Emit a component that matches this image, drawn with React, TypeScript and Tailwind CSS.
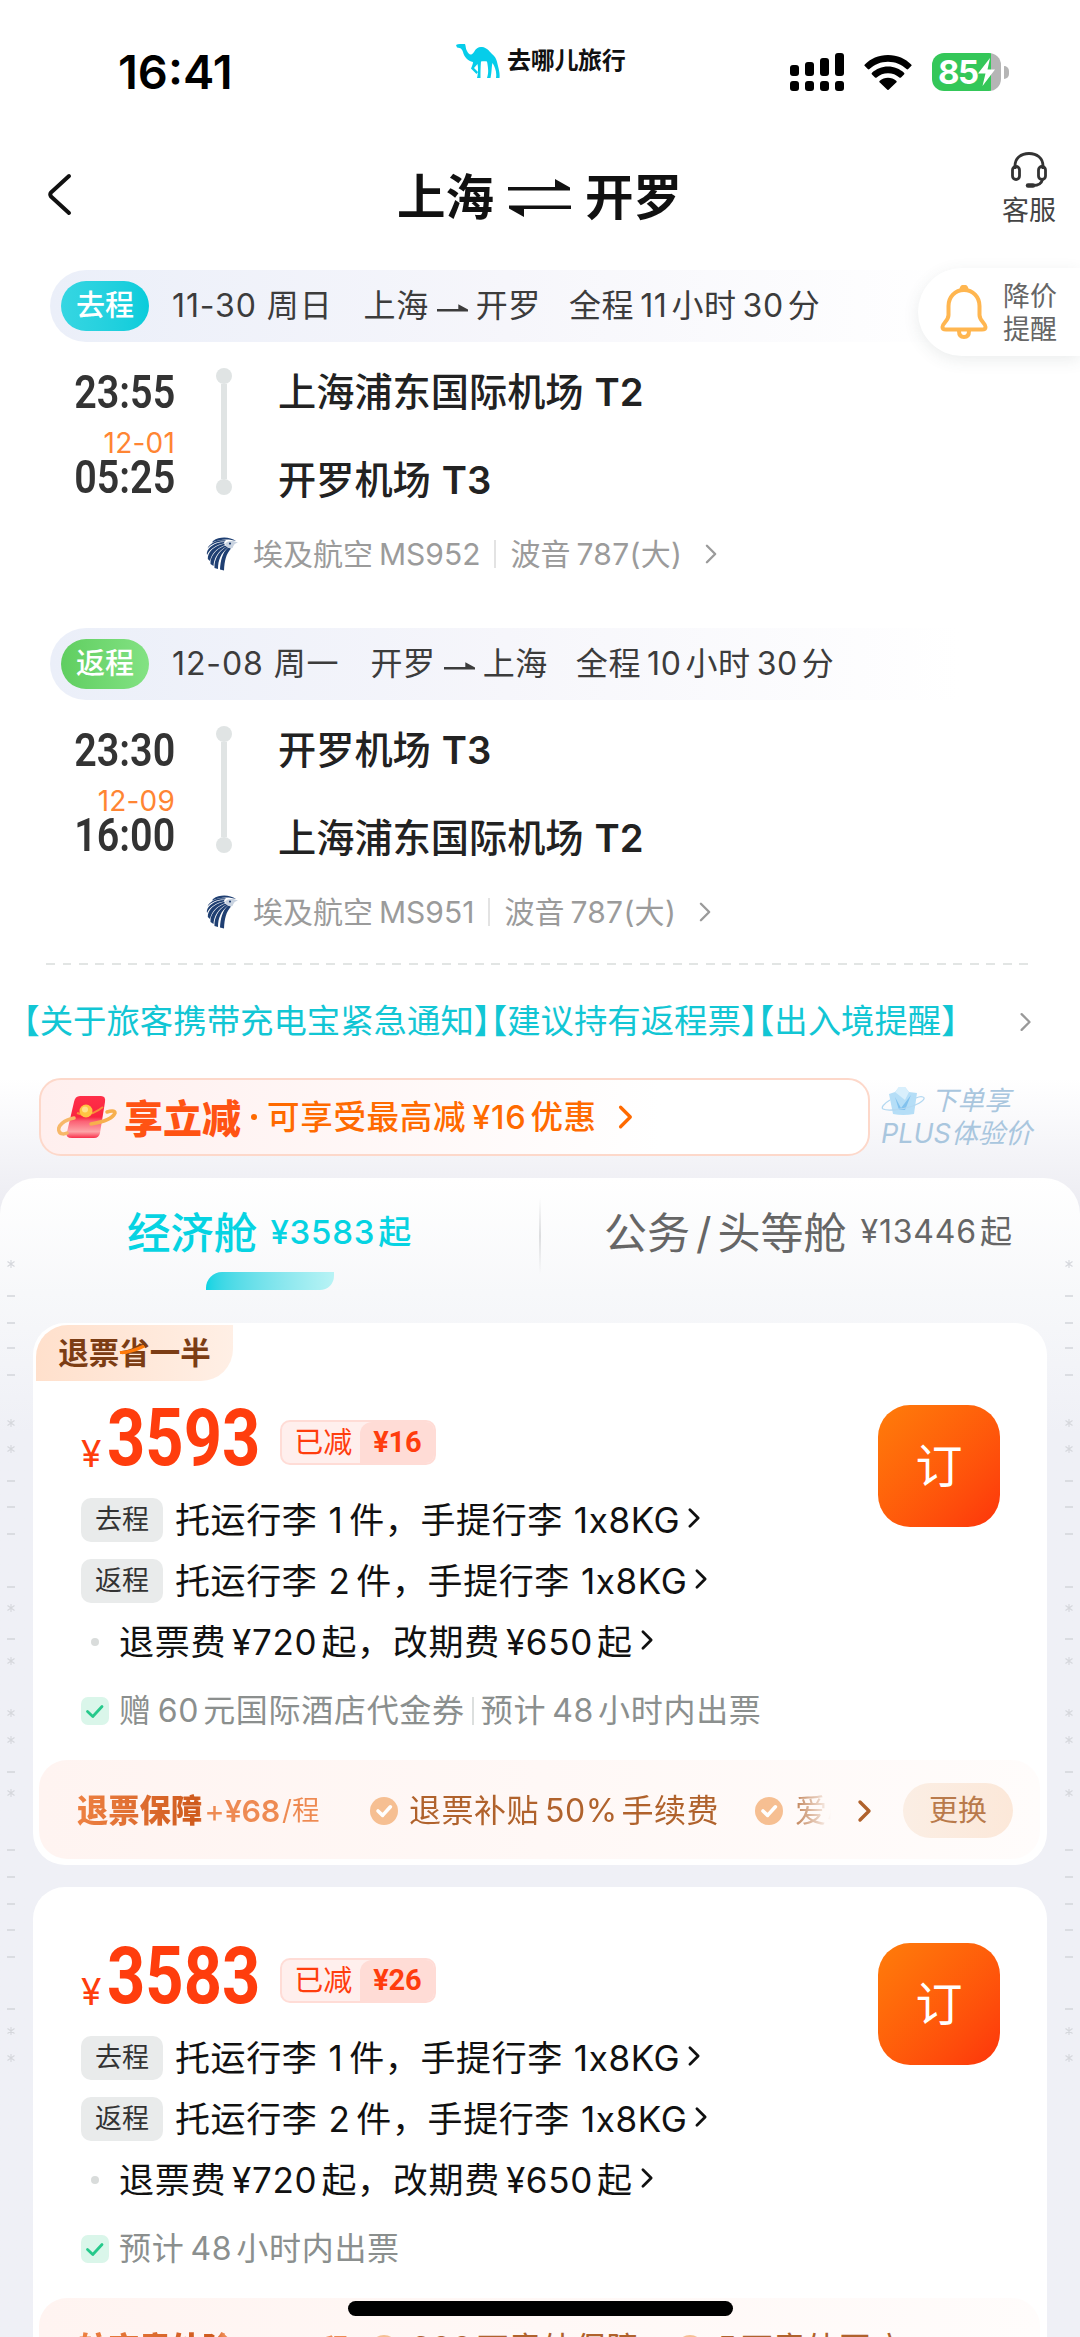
import type { ReactNode } from "react";

interface Leg {
  label: string;
  pill: string;
  date: string;
  from: string;
  to: string;
  duration: [string, string];
  depart: string;
  arriveDate: string;
  arrive: string;
  departAirport: [string, string];
  arriveAirport: [string, string];
  flight: string;
}

interface Fare {
  tag?: string;
  price: string;
  cut: string;
  perks: ReactNode;
  insurance: ReactNode;
}

const legs: Leg[] = [
  {
    label: "去程",
    pill: "bg-gradient-to-r from-[#35d6e2] to-[#08ccdb]",
    date: "11-30 周日",
    from: "上海",
    to: "开罗",
    duration: ["11", "30"],
    depart: "23:55",
    arriveDate: "12-01",
    arrive: "05:25",
    departAirport: ["上海浦东国际机场", "T2"],
    arriveAirport: ["开罗机场", "T3"],
    flight: "MS952",
  },
  {
    label: "返程",
    pill: "bg-gradient-to-r from-[#5fce60] to-[#83e283]",
    date: "12-08 周一",
    from: "开罗",
    to: "上海",
    duration: ["10", "30"],
    depart: "23:30",
    arriveDate: "12-09",
    arrive: "16:00",
    departAirport: ["开罗机场", "T3"],
    arriveAirport: ["上海浦东国际机场", "T2"],
    flight: "MS951",
  },
];

const fares: Fare[] = [
  {
    tag: "退票省一半",
    price: "3593",
    cut: "¥16",
    perks: (
      <>
        <span>赠</span>
        <Num>60</Num>
        <span>元国际酒店代金券</span>
        <i className="mx-[7px] h-[28px] w-[2px] bg-[#dcdfde]" />
        <span>预计</span>
        <Num>48</Num>
        <span>小时内出票</span>
      </>
    ),
    insurance: (
      <>
        <InsuranceName name="退票保障" price="¥68" />
        <div className="flex flex-1 items-center overflow-hidden [mask-image:linear-gradient(to_right,black_90%,transparent_100%)]">
          <RoundCheck />
          <span className="ml-[11px] flex items-center tracking-[0.5px]">
            退票补贴<Num>50%</Num>手续费
          </span>
          <RoundCheck className="ml-[36px]" />
          <span className="ml-[12px]">爱心</span>
        </div>
        <Chevron className="ml-[26px] mr-[30px] h-[24px] w-[16px] text-[#b0622c]" stroke={3.4} />
        <button className="h-[55px] w-[110px] rounded-full bg-gradient-to-r from-[#fbeee4] to-[#fce8d9] text-[29px] text-[#b97a4b]">更换</button>
      </>
    ),
  },
  {
    price: "3583",
    cut: "¥26",
    perks: (
      <>
        <span>预计</span>
        <Num>48</Num>
        <span>小时内出票</span>
      </>
    ),
    insurance: (
      <>
        <InsuranceName name="航空意外险" price="¥70" />
        <div className="flex flex-1 items-center">
          <RoundCheck />
          <span className="ml-[7px] flex items-center tracking-[0.5px]">
            <Num>300</Num>万意外保障
          </span>
          <RoundCheck className="ml-[37px]" />
          <span className="ml-[7px] flex items-center tracking-[0.5px]">
            <Num>5</Num>万意外医疗
          </span>
        </div>
        <Chevron className="mr-[12px] h-[24px] w-[16px] text-[#b0622c]" stroke={3.4} />
      </>
    ),
  },
];

function Num({ children }: { children: ReactNode }) {
  return <span className="ml-[6px] mr-[4px]">{children}</span>;
}

function Chevron({ className = "", stroke = 2.6 }: { className?: string; stroke?: number }) {
  return (
    <svg className={`shrink-0 ${className}`} viewBox="0 0 16 24" fill="none" stroke="currentColor" strokeWidth={stroke} strokeLinecap="round" strokeLinejoin="round">
      <path d="M3 3 L12 12 L3 21" />
    </svg>
  );
}

function RoundCheck({ className = "" }: { className?: string }) {
  return (
    <svg className={`size-[28px] shrink-0 ${className}`} viewBox="0 0 28 28" fill="none">
      <circle cx="14" cy="14" r="14" fill="#f6bf92" />
      <path d="M8 14 L12.6 18.4 L20.4 9.8" stroke="#fff" strokeWidth="3.6" strokeLinecap="round" strokeLinejoin="round" />
    </svg>
  );
}

function InsuranceName({ name, price }: { name: string; price: string }) {
  return (
    <div className="w-[293px] shrink-0">
      <div className="inline-flex items-center bg-gradient-to-r from-[#ee8142] via-[#cf5a1c] via-50% to-[#ee8a52] to-54% bg-clip-text text-transparent">
        <span className="text-[31.3px] font-black">{name}</span>
        <span className="ml-[2px] text-[31px]">+</span>
        <span className="text-[30.5px] font-semibold tracking-[-0.3px]">{price}</span>
        <span className="ml-[2px] text-[27.5px]">/程</span>
      </div>
    </div>
  );
}

function EgyptAirLogo() {
  return (
    <svg className="mr-[14px] h-[34px] w-[33px]" viewBox="0 0 33 34" fill="#1f3f72">
      <path d="M14 32.500 C14.500 24 16 16 22 10.500 L25 11.500 C20 17 18.500 24 18 33.500Z" />
      <path d="M8.500 31 C8 23 12 15 20.500 9.500 L22 10.500 C15 16 12 23 12 32Z" />
      <path d="M4.500 27 C4 20 9 12.500 19 8.500 L20.500 9.500 C12 14 8 21 7.500 29Z" />
      <path d="M1.800 22 C1.500 15 8 9 18 6.800 L19 8 C10 11.500 5.500 17 4 24Z" />
      <path d="M.8 16 C2 10 9 5.500 18 5 L18.500 6.300 C10 7.800 4 12 1 18Z" />
      <path d="M2.500 9.500 C7 4 14 2.500 20 3.500 L18.500 4.600 C12 4.300 6 6.500 1.500 11.500Z" />
      <path d="M7 4 C14 -1 24 0 30 4 C24 2 15 1.500 6 5.500Z" />
      <path d="M19 6.500 C22 3 28 3.500 32 5.500 C29 6 27.500 8 26.500 11 C24 12 21 11 19 6.500Z" fill="#c9d3e0" />
      <circle cx="24" cy="6.600" r="1.100" />
    </svg>
  );
}

function StatusBar() {
  return (
    <div className="flex h-[144px] items-center pl-[118px] pr-[71px]">
      <div className="mt-[-2px] w-[338px] text-[47px] font-semibold leading-none text-black">16:41</div>
      <div className="mb-[22px] flex items-center">
        <svg className="h-[35px] w-[44px]" viewBox="0 0 44 35" fill="#06cdea">
          <path d="M0 1 C2 -.3 5 0 9 0 C10 2 9.500 5 11 7 C13 11 15 12 18 8 C20 4 23 2.500 26 3 C31 3.500 33 7 36 10 C40 13 41 17 42 22 C43 26 44 30 43.500 34 L40 34 C41 28 39 23 36.500 19 C35.500 22 36 27 34.500 34 L31 34 C33 28 32 23 31 17.500 C29 17 27 17 25 17.500 C24.500 23 24.500 29 24.500 34 L21 34 C22 30 22.500 25 21.500 20 L18 24 L22 28 L20.500 30 L15 24.500 C16 22 17 20 17 18 C12 17 8 13 7 8 C6 5 5 4 1 3.500 Z" />
        </svg>
        <span className="ml-[7px] text-[24px] font-bold leading-none tracking-[-0.3px] text-[#111]">去哪儿旅行</span>
      </div>
      <svg className="ml-auto h-[38px] w-[54px]" viewBox="0 0 54 38">
        <rect x="0" y="12" width="9" height="11" rx="3" />
        <rect x="15" y="9" width="9" height="14" rx="3" />
        <rect x="30" y="5" width="9" height="18" rx="3" />
        <rect x="45" y="0" width="9" height="23" rx="3" />
        <rect x="0" y="28" width="9" height="10" rx="3" />
        <rect x="15" y="28" width="9" height="10" rx="3" />
        <rect x="30" y="28" width="9" height="10" rx="3" />
        <rect x="45" y="28" width="9" height="10" rx="3" />
      </svg>
      <svg className="ml-[20px] h-[35px] w-[48px]" viewBox="0 0 48 35">
        <path d="M24 0 C14.500 0 6.500 3.800 .8 9.400 a1.200 1.200 0 0 0 0 1.700 L3.800 14 a1.200 1.200 0 0 0 1.700 0 C10.300 9.500 16.800 6.700 24 6.700 S37.700 9.500 42.500 14 a1.200 1.200 0 0 0 1.700 0 L47.200 11.100 a1.200 1.200 0 0 0 0-1.700 C41.500 3.800 33.500 0 24 0Z" />
        <path d="M24 11.500 c-6.200 0-11.800 2.400-16 6.200 a1.200 1.200 0 0 0 0 1.800 l3 2.900 a1.300 1.300 0 0 0 1.700 0 c3-2.600 7-4.200 11.300-4.200 s8.300 1.600 11.300 4.200 a1.300 1.300 0 0 0 1.700 0 l3-2.900 a1.200 1.200 0 0 0 0-1.800 c-4.200-3.800-9.800-6.200-16-6.200Z" />
        <path d="M24 22.800 c-3.100 0-6 1.200-8.200 3 a1.200 1.200 0 0 0 0 1.800 l7.300 7 a1.300 1.300 0 0 0 1.800 0 l7.300-7 a1.200 1.200 0 0 0 0-1.800 c-2.200-1.800-5.100-3-8.200-3Z" />
      </svg>
      <div className="ml-[20px] flex h-[38px] w-[69px] items-center rounded-[12px] bg-gradient-to-r from-[#34c759] from-86% to-[#b5b5b5] to-86% pl-[6px]">
        <span className="text-[33px] font-bold leading-none tracking-[-1.5px] text-white">85</span>
        <svg className="h-[28px] w-[17px]" viewBox="0 0 17 28" fill="#fff">
          <path d="M12 0 L0 15.500 H7.500 L4.500 28 L17 11.500 H9.500 Z" />
        </svg>
      </div>
      <div className="ml-[3px] h-[13px] w-[5px] rounded-r-full bg-[#b5b5b5]" />
    </div>
  );
}

function Header() {
  return (
    <div className="flex h-[126px] items-start pl-[47px] pr-[24px]">
      <svg className="mt-[29px] h-[43px] w-[25px]" viewBox="0 0 25 43" fill="none" stroke="#111" strokeWidth="4" strokeLinecap="round" strokeLinejoin="round">
        <path d="M22 3 L4 19.500 Q2.500 21.500 4 23.500 L22 40" />
      </svg>
      <h1 className="ml-[325px] mt-[24px] flex items-center text-[48.5px] font-bold leading-[60px] text-[#111]">
        上海
        <svg className="mx-[14px] h-[38px] w-[63px]" viewBox="0 0 63 38" fill="#111">
          <path d="M0 8 H47 V0 L62 8.500 V11.500 H0 Z" />
          <path d="M63 30 H16 V38 L1 29.500 V26.500 H63 Z" />
        </svg>
        开罗
      </h1>
      <div className="ml-auto mt-[7px] flex flex-col items-center">
        <svg className="h-[38px] w-[38px]" viewBox="0 0 38 38" fill="none" stroke="#333" strokeWidth="2.800">
          <path d="M5 18 V15 C5 7 11 2.500 19 2.500 S33 7 33 15 V18" />
          <rect x="2.500" y="15.500" width="7" height="13" rx="3.500" />
          <rect x="28.500" y="15.500" width="7" height="13" rx="3.500" />
          <path d="M32.500 28.500 C31.500 33 27 34.500 23 34.500" />
          <path d="M18 34.500 H23" strokeWidth="4.500" strokeLinecap="round" />
        </svg>
        <span className="mt-[5px] text-[27px] leading-[34px] text-[#444]">客服</span>
      </div>
    </div>
  );
}

function PriceAlert() {
  return (
    <div className="absolute right-0 top-[268px] flex h-[88px] w-[162px] items-center rounded-l-full bg-white pl-[22px] shadow-[0_4px_16px_rgba(60,80,80,0.10)]">
      <svg className="h-[54px] w-[48px]" viewBox="0 0 48 54" fill="none" stroke="#ffb650" strokeWidth="4" strokeLinejoin="round">
        <path d="M24 5 C15 5 8.500 12 8.500 21 V30 C8.500 36 2.500 38 2.500 42 Q2.500 44.500 6 44.500 H42 Q45.500 44.500 45.500 42 C45.500 38 39.500 36 39.500 30 V21 C39.500 12 33 5 24 5Z" />
        <path d="M21.500 5 Q21.500 1.800 24 1.800 T26.500 5" />
        <path d="M19 46 Q19 52 24 52 T29 46" />
      </svg>
      <span className="ml-[15px] mt-[2px] text-[27px] leading-[33px] text-[#666]">
        降价
        <br />
        提醒
      </span>
    </div>
  );
}

function Airport({ name: [city, terminal], className = "" }: { name: [string, string]; className?: string }) {
  return (
    <span className={className}>
      {city}
      <span className="ml-[11px] font-semibold">{terminal}</span>
    </span>
  );
}

function LegCard({ leg }: { leg: Leg }) {
  return (
    <section className="h-[358px]">
      <div className="ml-[50px] flex h-[72px] w-[910px] items-center rounded-l-[36px] bg-gradient-to-r from-[#ebeff9] via-[#f6f6fb] via-50% to-white pl-[11px] text-[32px] tracking-[0.6px] text-[#3c3c3c]">
        <span className={`flex h-[50px] w-[88px] items-center justify-center rounded-[25px] text-[29px] font-medium tracking-normal text-white ${leg.pill}`}>{leg.label}</span>
        <span className="ml-[23px] tracking-[0.9px]">{leg.date}</span>
        <span className="ml-[31px] flex items-center">
          {leg.from}
          <svg className="mx-[8px] mt-[6px] h-[10px] w-[31px]" viewBox="0 0 32 10" fill="#3c3c3c">
            <path d="M0 5 H22 V0 L32 5.500 V7.500 H0 Z" />
          </svg>
          {leg.to}
        </span>
        <span className="ml-[28px] flex items-center">
          全程<Num>{leg.duration[0]}</Num>小时<Num>{leg.duration[1]}</Num>分
        </span>
      </div>
      <div className="mt-[26px] flex h-[132px] pl-[60px]">
        <div className="flex w-[115px] flex-col items-end">
          <span className="mt-[4px] origin-right scale-x-[0.84] font-[Roboto] text-[47px] font-semibold leading-[40px] text-[#333]">{leg.depart}</span>
          <span className="mt-[19px] text-[28px] leading-[24px] tracking-[0.2px] text-[#ff8533]">{leg.arriveDate}</span>
          <span className="mt-[2px] origin-right scale-x-[0.84] font-[Roboto] text-[47px] font-semibold leading-[40px] text-[#333]">{leg.arrive}</span>
        </div>
        <div className="ml-[41px] flex h-[127px] w-[16px] flex-col items-center">
          <i className="size-[16px] rounded-full bg-[#e0e4e4]" />
          <i className="w-[6px] flex-1 bg-[#e0e4e4]" />
          <i className="size-[16px] rounded-full bg-[#e0e4e4]" />
        </div>
        <div className="ml-[46px] mt-[-1px] flex flex-col text-[38.2px] font-medium leading-[50px] text-[#222]">
          <Airport name={leg.departAirport} />
          <Airport name={leg.arriveAirport} className="mt-[38px]" />
        </div>
      </div>
      <div className="mt-[33px] flex h-[42px] items-center pl-[206px] text-[30px] text-[#9b9b9b]">
        <EgyptAirLogo />
        <span>埃及航空</span>
        <span className="ml-[6px]">{leg.flight}</span>
        <i className="mx-[14px] h-[28px] w-[2px] bg-[#e3e3e3]" />
        <span>波音</span>
        <span className="ml-[6px] tracking-[0.3px]">787(大)</span>
        <Chevron className="ml-[22px] h-[22px] w-[15px]" />
      </div>
    </section>
  );
}

function Promo() {
  return (
    <div className="flex h-[78px] items-center pl-[39px]">
      <div className="flex h-[78px] w-[831px] items-center rounded-[22px] border-2 border-[#fdd8ca] bg-gradient-to-r from-[#ffefee] to-white to-75% pl-[16px] text-[#ff6a00]">
        <svg className="h-[46px] w-[60px]" viewBox="0 0 60 46" fill="none">
          <defs>
            <linearGradient id="packet" x1="0" y1="0" x2="0" y2="1">
              <stop offset="0" stopColor="#ff2f49" />
              <stop offset="0.5" stopColor="#f9243f" />
              <stop offset="0.6" stopColor="#fb6074" />
              <stop offset="0.85" stopColor="#fda5a8" />
              <stop offset="1" stopColor="#f92f4a" />
            </linearGradient>
          </defs>
          <path d="M23 2 H44 Q49 2 48 8 L43 39 Q42 44 37 44 H15 Q8 44 10 38 L17 8 Q18 2 23 2Z" fill="url(#packet)" />
          <path d="M17 24 C7 26 0 32 2 37 C3 41 8 40 10 39" stroke="#f7b869" strokeWidth="3.500" strokeLinecap="round" />
          <path d="M34 30 C46 28 56 24 58 19 C58 16 53 17 50 18" stroke="#f7b04e" strokeWidth="3.500" strokeLinecap="round" />
          <path d="M20 19 Q32 24 46 13" stroke="#f98a3c" strokeWidth="2" />
          <circle cx="29" cy="17" r="6.500" fill="#ffc442" />
          <circle cx="28" cy="15.500" r="3" fill="#ffe08a" />
        </svg>
        <span className="ml-[7px] mt-[3px] text-[39px] font-black leading-none text-[#ff5313]">享立减</span>
        <i className="mx-[10px] size-[6px] rounded-full bg-[#ff6a00]" />
        <span className="mt-[2px] flex items-center text-[32.5px] font-medium tracking-[0.7px]">
          可享受最高减<Num>¥16</Num>优惠
        </span>
        <Chevron className="ml-[20px] h-[26px] w-[18px]" stroke={3} />
      </div>
      <div className="ml-[11px] flex flex-col text-[27px] italic leading-[33px] text-[#a9c6de]">
        <div className="flex items-center">
          <svg className="h-[30px] w-[44px]" viewBox="0 0 44 30" fill="none">
            <path d="M8 8 L14 6 L18 1 H24 L28 6 L36 7 L33 28 Q22 30 12 28 Z" fill="#b5def7" />
            <path d="M14 6 L18 1 H24 L28 6 L24 14 Z" fill="#d8effc" />
            <path d="M14 11 L20 22 L30 9 L24 24 H18 Z" fill="#82c2ee" />
            <path d="M9 14 C2 18 0 22 2 23 C6 25 20 24 32 20 C42 16 45 12 42 11 C40 10 37 11 35 12" stroke="#b3d8f1" strokeWidth="1.300" />
          </svg>
          <span className="ml-[6px] text-[26.5px]">下单享</span>
        </div>
        <span>PLUS体验价</span>
      </div>
    </div>
  );
}

function CabinTabs() {
  return (
    <div className="flex h-[145px]">
      <div className="flex w-[539px] flex-col items-center pt-[25px]">
        <div className="flex items-center text-[#06d3e2]">
          <span className="text-[43.5px] font-medium leading-[60px]">经济舱</span>
          <span className="ml-[13px] mt-[-2px] flex items-center text-[33px] font-medium leading-[60px] tracking-[0.8px]">
            ¥3583<span className="ml-[3px]">起</span>
          </span>
        </div>
        <i className="mt-[9px] h-[18px] w-[128px] rounded-br-[14px] rounded-tl-[16px] bg-gradient-to-r from-[#08d4e3] to-[#b8f3f5]" />
      </div>
      <i className="mt-[20px] h-[76px] w-[2px] bg-gradient-to-b from-transparent via-[#dcdddf] to-transparent" />
      <div className="ml-[63px] flex h-[110px] items-center text-[#666]">
        <span className="flex text-[43px]">
          公务<span className="mx-[6px]">/</span>头等舱
        </span>
        <span className="ml-[14px] mt-[-2px] flex items-center text-[32px] tracking-[0.8px]">
          ¥13446<span className="ml-[3px]">起</span>
        </span>
      </div>
    </div>
  );
}

// faint scroll marks running down both edges of the list
const dashes = [118, 145, 170, 197, 303, 329, 356, 409, 461, 594, 672, 699, 726, 752, 779, 831];
const stars = [86, 245, 271, 430, 483, 535, 562, 615, 853, 880];

function EdgeMarks({ className }: { className: string }) {
  return (
    <svg className={`absolute top-0 h-[1159px] w-[10px] ${className}`} viewBox="0 0 10 1159" stroke="#d5d7dc" strokeWidth="1.600">
      {dashes.map((y) => (
        <path key={y} d={`M1 ${y} H9`} />
      ))}
      {stars.map((y) => (
        <path key={y} d={`M5 ${y - 4} V${y + 4} M1.500 ${y - 2.5} L8.500 ${y + 2.5} M1.500 ${y + 2.5} L8.500 ${y - 2.5}`} strokeWidth="1.100" />
      ))}
    </svg>
  );
}

function BaggageRow({ label, count }: { label: string; count: string }) {
  return (
    <div className="mb-[17px] flex h-[44px] items-center text-[35px] tracking-[0.6px] text-[#111]">
      <span className="flex h-[44px] w-[82px] items-center justify-center rounded-[10px] bg-[#e9ebeb] text-[27px] tracking-normal text-[#333]">{label}</span>
      <span className="ml-[12px]">托运行李</span>
      <span className="ml-[11px] mr-[6px]">{count}</span>
      <span>件，手提行李</span>
      <span className="ml-[11px]">1x8KG</span>
      <Chevron className="ml-[7px] mt-[-4px] h-[22px] w-[15px]" stroke={3} />
    </div>
  );
}

function FareCard({ fare }: { fare: Fare }) {
  return (
    <article className="mx-[33px] mb-[22px] rounded-[32px] bg-white">
      {fare.tag ? (
        <div className="flex h-[59px] px-[3px] pt-[2px]">
          <div className="relative flex h-[56px] w-[197px] items-center justify-center rounded-br-[32px] rounded-tl-[32px] bg-gradient-to-r from-[#ffe0cc] to-[#ffefe5] text-[30.5px] font-bold text-[#7c3d14]">
            {fare.tag}
            <svg className="absolute left-[83px] top-[20px] h-[9px] w-[26px]" viewBox="0 0 26 9">
              <path d="M1 8 Q14 7 25 1" stroke="#ff7a0c" strokeWidth="3.500" fill="none" />
            </svg>
          </div>
        </div>
      ) : (
        <div className="h-[33px]" />
      )}
      <div className="flex h-[378px] justify-between pl-[48px] pr-[47px] pt-[23px]">
        <div>
          <div className="flex h-[64px] items-end text-[#ff3d0d]">
            <span className="mb-[-5px] text-[37px] leading-[40px]">¥</span>
            <span className="ml-[6px] w-[153px] origin-left scale-x-[0.835] font-[Roboto] text-[80px] font-bold leading-[62px]">{fare.price}</span>
            <span className="mb-[4px] ml-[20px] flex h-[45px] overflow-hidden rounded-[10px] border-2 border-[#ffdcd6] bg-[#ffefed] text-[29px] leading-[41px]">
              <span className="pl-[12px] pr-[8px]">已减</span>
              <span className="rounded-tl-[12px] bg-[#ffdcd6] px-[13px] font-[Roboto] font-bold tracking-[-0.3px]">{fare.cut}</span>
            </span>
          </div>
          <div className="mt-[29px]">
            <BaggageRow label="去程" count="1" />
            <BaggageRow label="返程" count="2" />
          </div>
          <div className="flex h-[44px] items-center text-[35px] tracking-[0.7px] text-[#111]">
            <i className="ml-[10px] mr-[20px] size-[8px] rounded-full bg-[#d9dcdb]" />
            <span>退票费</span>
            <Num>¥720</Num>
            <span>起，改期费</span>
            <Num>¥650</Num>
            <span>起</span>
            <Chevron className="ml-[7px] mt-[-4px] h-[22px] w-[15px]" stroke={3} />
          </div>
          <div className="mt-[25px] flex h-[44px] items-center text-[32px] tracking-[0.7px] text-[#8b8f8e]">
            <svg className="mr-[10px] size-[28px]" viewBox="0 0 28 28" fill="none">
              <rect width="28" height="28" rx="7" fill="#daf6ea" />
              <path d="M6.500 14.500 L11.800 19.500 L21 9.500" stroke="#26c98b" strokeWidth="2.800" strokeLinecap="round" strokeLinejoin="round" />
            </svg>
            {fare.perks}
          </div>
        </div>
        <button className="size-[122px] rounded-[32px] bg-gradient-to-br from-[#ff7c0a] to-[#fd330b] text-[47px] text-white">订</button>
      </div>
      <div className="pb-[6px] pl-[6px] pr-[7px]">
        <div className="flex h-[99px] items-center rounded-[28px] bg-gradient-to-r from-[#fff4f1] to-[#fffcfb] pl-[38px] pr-[27px] pt-[2px] text-[32px] text-[#b0622c]">{fare.insurance}</div>
      </div>
    </article>
  );
}

export default function App() {
  return (
    <main className="relative h-[2337px] w-[1080px] overflow-hidden whitespace-nowrap bg-white font-[Inter,'Noto_Sans_CJK_SC',sans-serif]">
      <StatusBar />
      <Header />
      {legs.map((leg) => (
        <LegCard key={leg.label} leg={leg} />
      ))}
      <PriceAlert />
      <div className="mt-[-23px] ml-[46px] h-[2px] w-[984px] bg-[repeating-linear-gradient(to_right,#e2e5e4_0_9px,transparent_9px_16.5px)]" />
      <div className="flex h-[113px] items-center pl-[23px] pr-[47px] text-[33.4px] text-[#12c6d4]">
        <span className="[font-feature-settings:'halt']">【关于旅客携带充电宝紧急通知】【建议持有返程票】【出入境提醒】</span>
        <Chevron className="ml-auto h-[22px] w-[14px] text-[#999]" />
      </div>
      <div className="h-[143px] bg-gradient-to-b from-white via-[#fafafc] via-25% to-[#ececf2] to-90%">
        <Promo />
      </div>
      <div className="relative mt-[-43px] h-[1159px] rounded-t-[36px] bg-gradient-to-b from-white via-[#f7f8fa] via-10% to-[#eff0f6] to-22%">
        <EdgeMarks className="left-[6px]" />
        <EdgeMarks className="right-[6px]" />
        <CabinTabs />
        {fares.map((fare) => (
          <FareCard key={fare.price} fare={fare} />
        ))}
      </div>
      <div className="absolute bottom-[21px] left-[348px] h-[15px] w-[385px] rounded-full bg-black" />
    </main>
  );
}
